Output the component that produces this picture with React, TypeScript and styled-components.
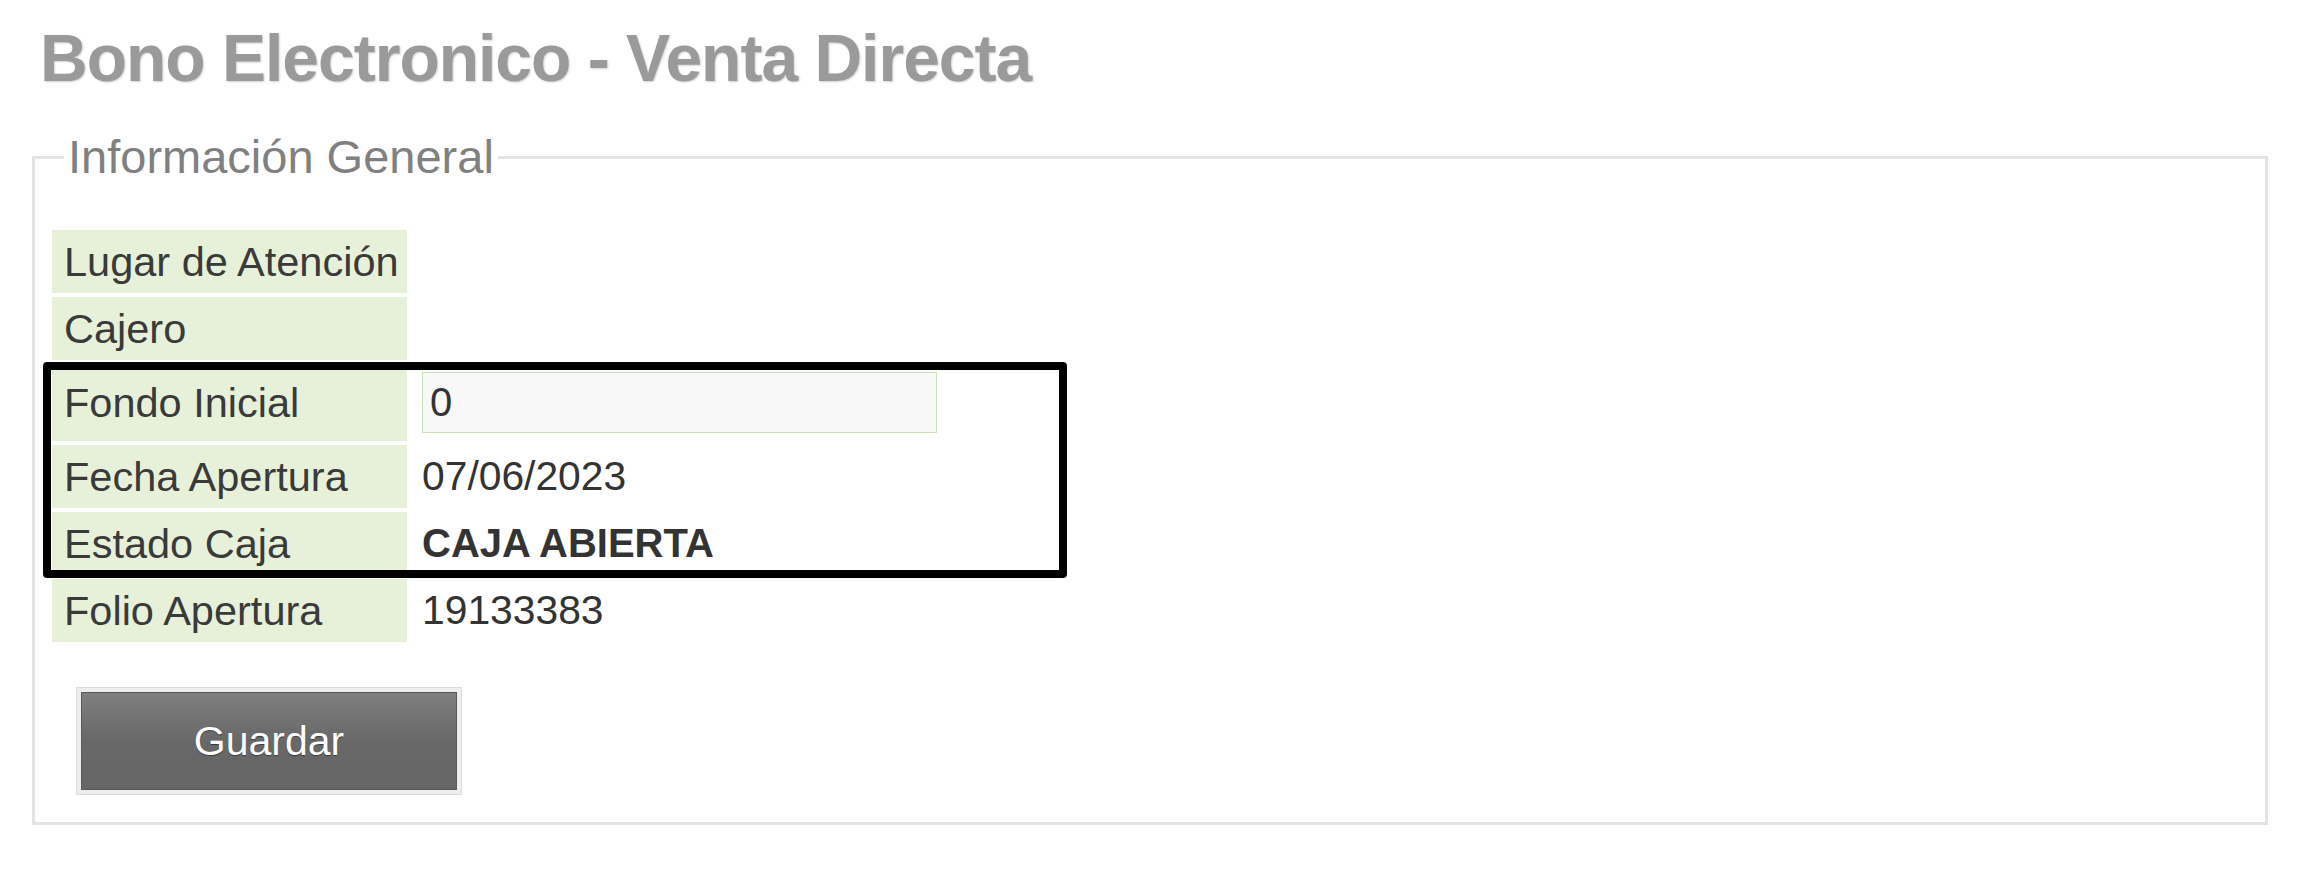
import React from "react";
import styled, { createGlobalStyle } from "styled-components";

const GlobalStyle = createGlobalStyle`
  html, body {
    margin: 0;
    padding: 0;
    background: #ffffff;
  }
  body {
    font-family: "Liberation Sans", Arial, sans-serif;
  }
  * {
    box-sizing: border-box;
  }
`;

const Page = styled.div`
  padding: 25px 30px 40px 32px;
`;

const Title = styled.h1`
  margin: 0 0 39px 8px;
  font-family: "Liberation Sans", Arial, sans-serif;
  font-size: 66px;
  line-height: 66px;
  font-weight: bold;
  letter-spacing: -1px;
  color: #9a9a9a;
  text-shadow: 1px 1px 2px rgba(0, 0, 0, 0.18);
`;

const Fieldset = styled.fieldset`
  margin: 0;
  padding: 0 17px 27px;
  border: 3px solid #e3e3e3;
  min-width: 0;
`;

const Legend = styled.legend`
  margin-left: 12px;
  padding: 0 4px;
  font-size: 47px;
  line-height: 54px;
  color: #808080;
`;

const InfoGrid = styled.div`
  position: relative;
  margin-top: 46px;
  display: grid;
  grid-template-columns: 355px auto;
  column-gap: 3px;
  row-gap: 4px;
  justify-content: start;
`;

const LabelCell = styled.div`
  display: flex;
  align-items: center;
  min-height: 63px;
  padding: 0 12px;
  background: #e7f1d9;
  font-size: 41.5px;
  color: #3a3a3a;
  white-space: nowrap;
`;

const ValueCell = styled.div<{ $bold?: boolean }>`
  display: flex;
  align-items: center;
  min-height: 63px;
  padding: 0 12px;
  font-size: ${(p) => (p.$bold ? "40px" : "40.8px")};
  font-weight: ${(p) => (p.$bold ? "bold" : "normal")};
  color: #333333;
  white-space: nowrap;
`;

const AmountInput = styled.input`
  width: 515px;
  height: 61px;
  margin: 8px 0;
  padding: 0 7px;
  border: 1px solid #cfe4b4;
  background: #f8f8f8;
  font-family: "Liberation Sans", Arial, sans-serif;
  font-size: 40px;
  color: #333333;
  outline: none;
`;

const Highlight = styled.div`
  position: absolute;
  left: -9px;
  top: 132px;
  width: 1024px;
  height: 216px;
  border: 8px solid #000000;
  border-radius: 4px;
  pointer-events: none;
`;

const ButtonFrame = styled.div`
  display: inline-block;
  margin: 45px 0 0 24px;
  padding: 4px;
  border: 1px solid #dcdcdc;
  background: #eeeeee;
`;

const SaveButton = styled.button`
  display: block;
  width: 376px;
  height: 98px;
  border: 1px solid #585858;
  background: linear-gradient(#808080 0%, #757575 20%, #686868 50%, #666666 100%);
  color: #ffffff;
  font-family: "Liberation Sans", Arial, sans-serif;
  font-size: 41px;
  text-shadow: 0 1px 1px rgba(0, 0, 0, 0.45);
  cursor: pointer;
`;

const rows: { label: string; value?: string; bold?: boolean; input?: boolean }[] = [
  { label: "Lugar de Atención" },
  { label: "Cajero" },
  { label: "Fondo Inicial", input: true },
  { label: "Fecha Apertura", value: "07/06/2023" },
  { label: "Estado Caja", value: "CAJA ABIERTA", bold: true },
  { label: "Folio Apertura", value: "19133383" },
];

export default function App() {
  return (
    <>
      <GlobalStyle />
      <Page>
        <Title>Bono Electronico - Venta Directa</Title>
        <Fieldset>
          <Legend>Información General</Legend>
          <InfoGrid>
            {rows.map((r) => (
              <React.Fragment key={r.label}>
                <LabelCell>{r.label}</LabelCell>
                <ValueCell $bold={r.bold}>
                  {r.input ? <AmountInput defaultValue="0" /> : r.value ?? ""}
                </ValueCell>
              </React.Fragment>
            ))}
            <Highlight />
          </InfoGrid>
          <ButtonFrame>
            <SaveButton type="button">Guardar</SaveButton>
          </ButtonFrame>
        </Fieldset>
      </Page>
    </>
  );
}
